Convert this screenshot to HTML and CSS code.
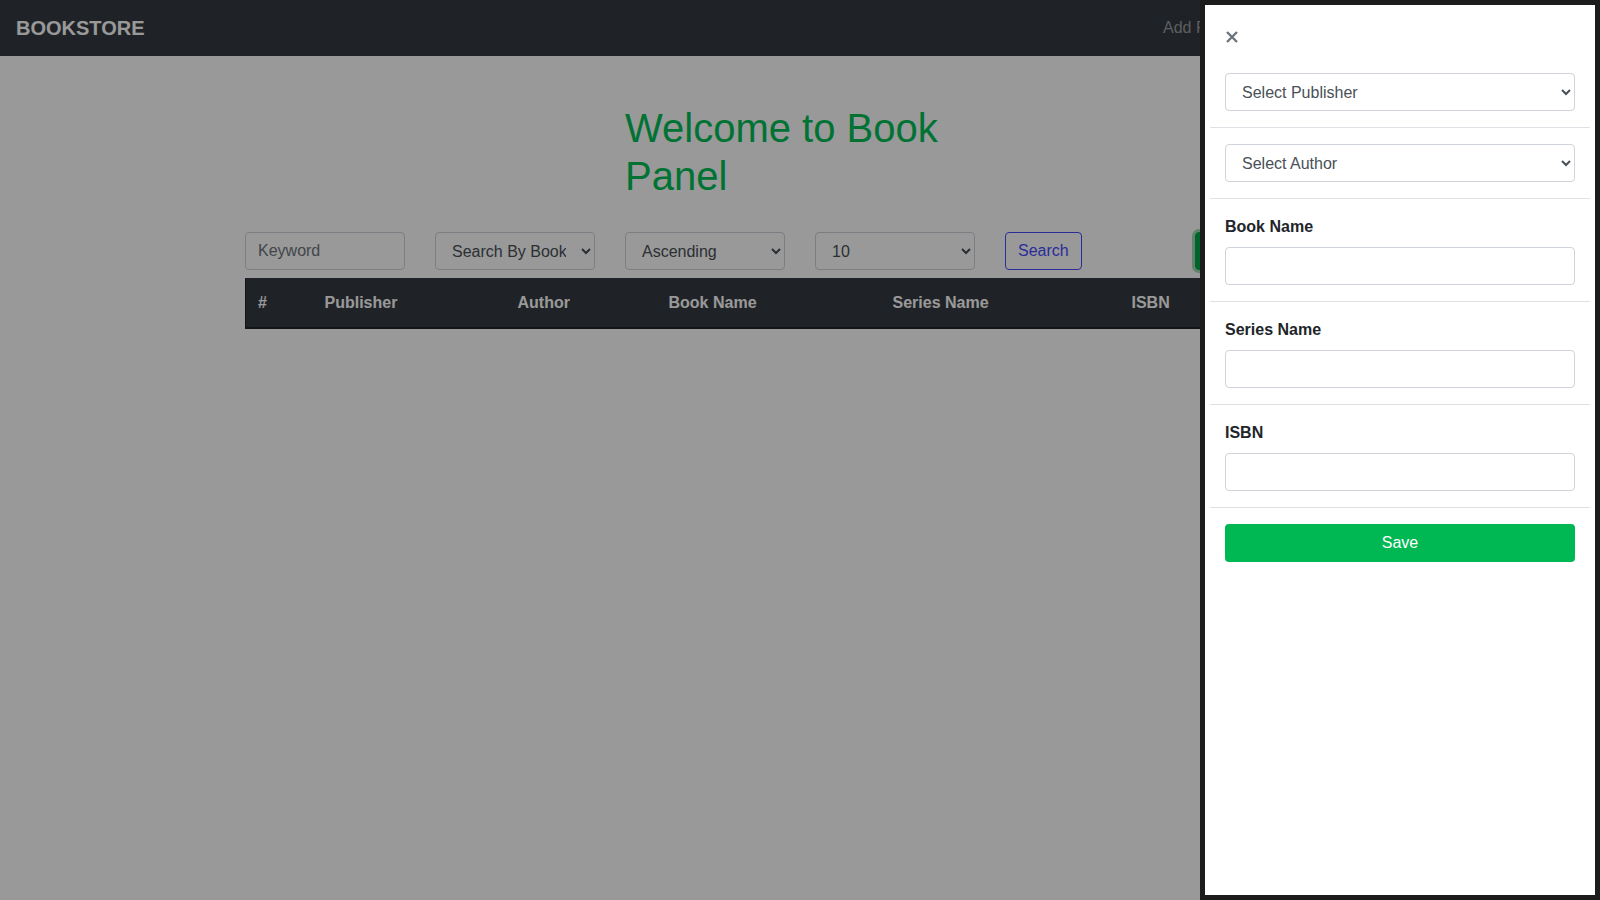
FILE: index.html
```html
<!DOCTYPE html>
<html lang="en">
<head>
<meta charset="utf-8">
<title>Bookstore</title>
<link rel="stylesheet" href="styles.css">
</head>
<body>
<nav class="navbar">
  <a class="brand" href="#">BOOKSTORE</a>
  <ul class="nav-links">
    <li><a href="#">Add Publisher</a></li>
    <li><a href="#">Add Author</a></li>
    <li><a href="#">Add Book</a></li>
  </ul>
</nav>

<main class="container">
  <h1 class="title">Welcome to Book Panel</h1>

  <div class="toolbar">
    <input class="field" type="text" placeholder="Keyword">
    <select class="field"><option>Search By Book</option></select>
    <select class="field"><option>Ascending</option></select>
    <select class="field"><option>10</option></select>
    <div><button class="btn-search" type="button">Search</button></div>
    <div><button class="btn-add" type="button">Add Book</button></div>
  </div>

  <table class="book-table">
    <thead>
      <tr>
        <th class="c-num">#</th>
        <th class="c-pub">Publisher</th>
        <th class="c-auth">Author</th>
        <th class="c-book">Book Name</th>
        <th class="c-series">Series Name</th>
        <th class="c-isbn">ISBN</th>
      </tr>
    </thead>
    <tbody></tbody>
  </table>
</main>

<div class="backdrop"></div>

<aside class="offcanvas">
  <div class="panel-head">
    <button class="close" type="button" aria-label="Close">
      <svg width="12" height="12" viewBox="0 0 12 12"><path d="M1 1 L11 11 M11 1 L1 11" stroke="#6c757d" stroke-width="2.4" fill="none"/></svg>
    </button>
  </div>
  <div class="section">
    <select class="field"><option>Select Publisher</option></select>
  </div>
  <div class="section">
    <select class="field"><option>Select Author</option></select>
  </div>
  <div class="section">
    <label class="label">Book Name</label>
    <input class="field" type="text">
  </div>
  <div class="section">
    <label class="label">Series Name</label>
    <input class="field" type="text">
  </div>
  <div class="section">
    <label class="label">ISBN</label>
    <input class="field" type="text">
  </div>
  <div class="section last">
    <button class="btn-save" type="button">Save</button>
  </div>
</aside>
</body>
</html>
```

FILE: styles.css
```css
* { box-sizing: border-box; }

body {
  margin: 0;
  font-family: "Liberation Sans", Arial, sans-serif;
  font-size: 16px;
  line-height: 1.5;
  color: #212529;
  background: #fff;
}

a { text-decoration: none; }

.navbar {
  display: flex;
  align-items: center;
  height: 56px;
  padding: 8px 16px;
  background: #343a40;
}

.brand {
  font-size: 20px;
  font-weight: 700;
  line-height: 30px;
  padding: 5px 0;
  color: #fff;
}

.nav-links {
  list-style: none;
  margin: 0 0 0 auto;
  padding: 0;
  display: flex;
  width: 429px;
}

.nav-links a {
  display: block;
  padding: 8px;
  color: rgba(255, 255, 255, 0.5);
}

.container {
  width: 1110px;
  margin: 48px auto 0;
}

.title {
  margin: 0 0 8px 380px;
  width: 350px;
  font-size: 40px;
  font-weight: 500;
  line-height: 1.2;
  color: #00c058;
}

.toolbar {
  display: grid;
  grid-template-columns: repeat(6, 160px);
  column-gap: 30px;
  margin-top: 32px;
}

.field {
  display: block;
  width: 100%;
  height: 38px;
  padding: 6px 12px;
  border: 1px solid #ced4da;
  border-radius: 4px;
  font: inherit;
  color: #495057;
  background: #fff;
}

.field::placeholder { color: #6c757d; }

.btn-search {
  height: 38px;
  padding: 6px 12px;
  border: 1px solid #4a4aff;
  border-radius: 4px;
  background: transparent;
  color: #4a4aff;
  font: inherit;
}

.btn-add {
  height: 38px;
  padding: 6px 12px;
  border: 1px solid #00a84a;
  border-radius: 4px;
  background: #00a84a;
  color: #fff;
  font: inherit;
  box-shadow: 0 0 0 3px rgba(72, 180, 97, 0.5);
}

.book-table {
  width: 100%;
  margin-top: 8px;
  border-collapse: collapse;
  table-layout: fixed;
  border-left: 1px solid #212529;
}

.book-table th {
  padding: 12px;
  background: #343a40;
  color: #fff;
  font-weight: 700;
  text-align: left;
  border-top: 1px solid #343a40;
  border-bottom: 2px solid #212529;
}

.c-num { width: 67px; }
.c-pub { width: 193px; }
.c-auth { width: 151px; }
.c-book { width: 224px; }
.c-series { width: 239px; }

.backdrop {
  position: fixed;
  inset: 0;
  background: rgba(0, 0, 0, 0.4);
}

.offcanvas {
  position: fixed;
  top: 0;
  right: 0;
  width: 400px;
  height: 100vh;
  padding: 0 5px;
  background: #fff;
  border: 5px solid #1c1c1c;
}

.panel-head {
  height: 52px;
  padding: 26px 16px 0;
}

.close {
  display: block;
  padding: 0;
  border: 0;
  background: transparent;
  line-height: 0;
}

.section {
  padding: 16px 15px;
  border-bottom: 1px solid #dee2e6;
}

.section.last { border-bottom: 0; }

.label {
  display: block;
  margin-bottom: 8px;
  font-weight: 700;
  line-height: 24px;
  color: #212529;
}

.btn-save {
  display: block;
  width: 100%;
  height: 38px;
  border: 0;
  border-radius: 4px;
  background: #00b853;
  color: #fff;
  font: inherit;
}
```
